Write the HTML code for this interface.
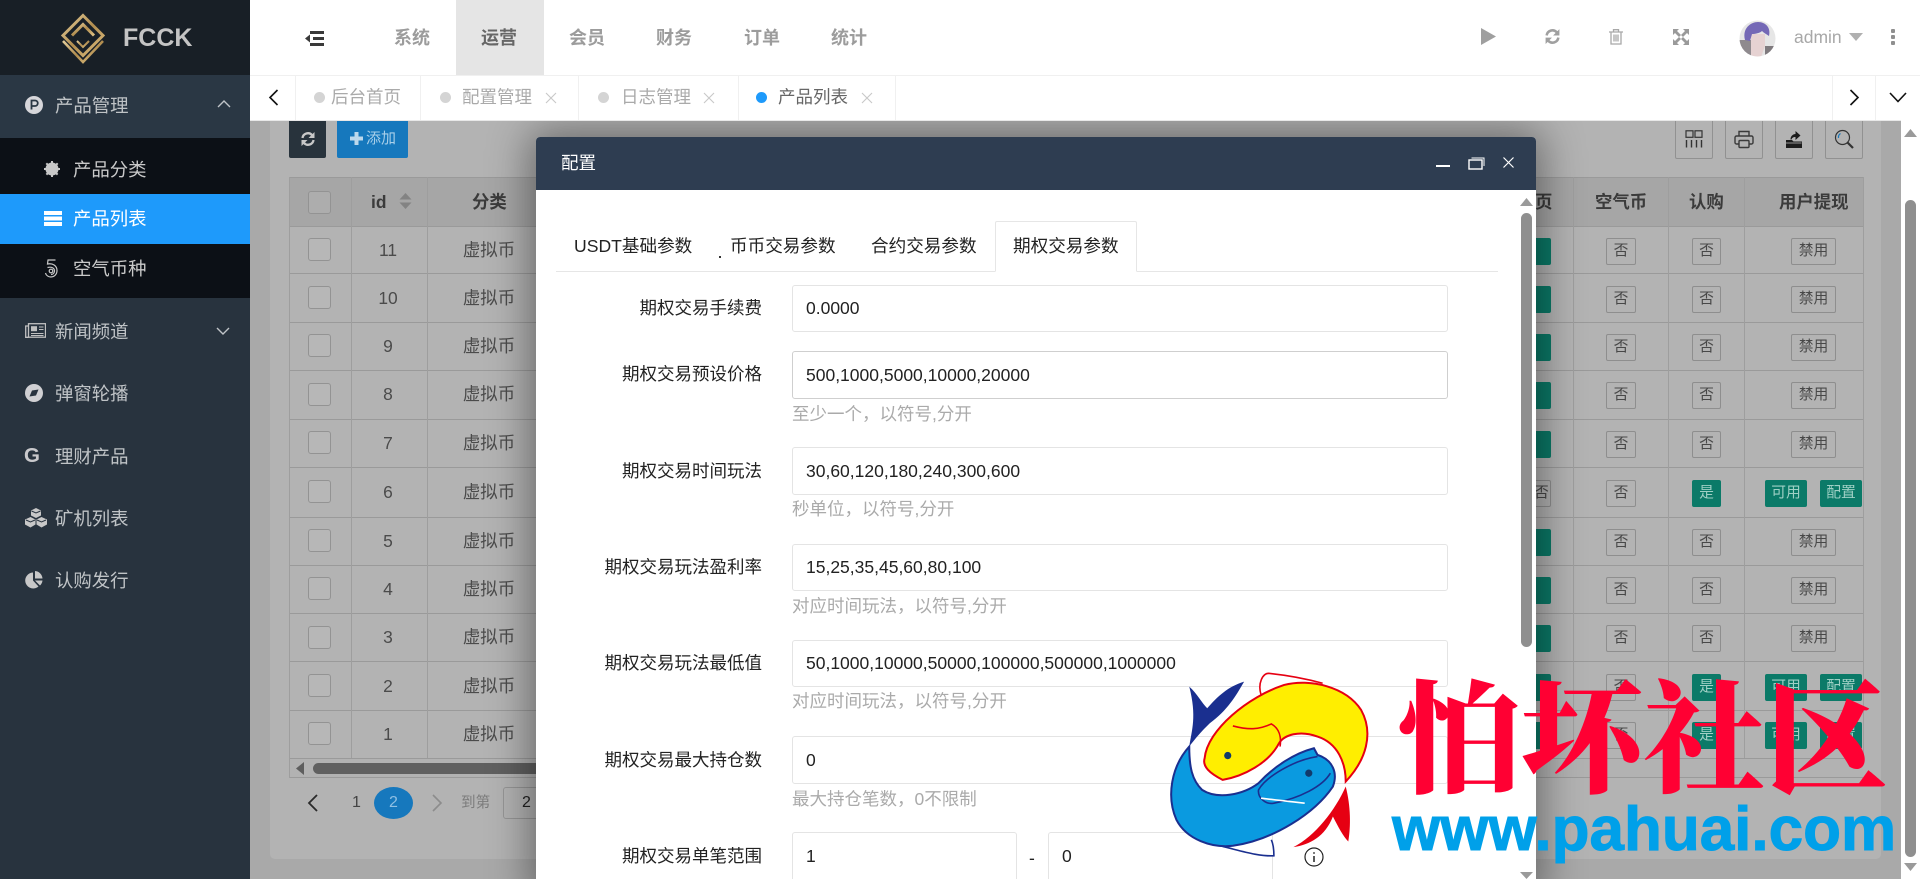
<!DOCTYPE html>
<html lang="zh"><head><meta charset="utf-8"><title>FCCK</title>
<style>
html,body{margin:0;padding:0;width:1920px;height:879px;overflow:hidden;background:#a9a9a9}
body{font-family:"Liberation Sans","Noto Sans CJK SC",sans-serif;position:relative;filter:blur(.35px)}
.a,.t,.r *,.l,.h,.ip,.hl,.vl,.tt{position:absolute}
.t{white-space:nowrap}
#side{left:0;top:0;width:250px;height:879px;background:#28333e;z-index:5;overflow:hidden}
.m{left:55px;width:100px;height:26px;line-height:26px;font-size:18.4px;color:#bfc3c6}
.s{left:73px;height:26px;line-height:26px;font-size:18.4px;color:#c9c9c9}
#top{left:250px;top:0;width:1670px;height:120px;z-index:5}
.nav{top:25px;height:26px;line-height:26px;font-size:18px;font-weight:bold;color:#9c9c9c}
.tab{top:85px;height:24px;line-height:24px;font-size:17.5px;color:#aaa}
.dot{width:11px;height:11px;border-radius:50%;background:#d4d4d4;top:92px}
.dv{top:76px;width:1px;height:44px;background:#f0f0f0}
.x{top:92px}
#bg{left:250px;top:120px;width:1651px;height:759px;background:#a9a9a9;overflow:hidden}
#panel{left:270px;top:120px;width:1611px;height:739px;background:#b3b3b3;border-radius:0 0 5px 5px}
.hl{left:289px;width:1574px;height:1px;background:#9a9a9a}
.vl{top:177px;width:1px;height:581px;background:#9e9e9e}
.r{left:0;width:1863px;position:absolute;color:#4b4b4b;font-size:17.4px}
.r>*{top:50%}
.cb{left:308px;width:21px;height:21px;margin-top:-12px;border:1px solid #939393;border-radius:3px;background:#b7b7b7}
.n{left:350px;width:76px;margin-top:-12.5px;height:24px;line-height:24px;text-align:center;font-weight:normal}
.v{left:427px;width:124px;margin-top:-12.5px;height:24px;line-height:24px;text-align:center;font-weight:normal}
.gb,.tb{height:25px;margin-top:-12.5px;line-height:25px;text-align:center;font-size:14.8px;border-radius:2px;border:1px solid #8e8e8e;color:#484848;box-sizing:content-box}
.tb{background:#0b7a68;border-color:#0b7a68;color:#9fd0c5}
.c0{left:1519px;width:30px}.c1{left:1606px;width:28px}.c2{left:1692px;width:27px}.c3{left:1791px;width:43px}
.k1{left:1765px;width:40px}.k2{left:1820px;width:40px}
.th{top:190px;height:24px;line-height:24px;font-size:17.4px;font-weight:bold;color:#3b3b3b}
.tbtn{top:119px;height:38px;width:36px;border:1px solid #919191;border-radius:0 0 2px 2px;background:#b3b3b3}
#modal{left:536px;top:137px;width:1000px;height:760px;background:#fff;box-shadow:0 0 42px 6px rgba(0,0,0,.42);border-radius:4px 4px 0 0;z-index:3}
#mh{left:536px;top:137px;width:1000px;height:53px;background:#2e3d51;border-radius:4px 4px 0 0;z-index:3}
.l{left:556px;width:206px;text-align:right;height:24px;line-height:24px;font-size:17.5px;color:#222;z-index:3;white-space:nowrap}
.ip{left:792px;border:1px solid #e4e4e4;border-radius:3px;font-size:17.5px;color:#222;padding-left:13px;box-sizing:border-box;width:656px;z-index:3;display:flex;align-items:center;background:#fff}
.h{left:792px;height:24px;line-height:24px;font-size:17.5px;color:#aaa;z-index:3;white-space:nowrap}
.tt{top:234px;height:24px;line-height:24px;font-size:17.6px;color:#222;z-index:3;white-space:nowrap}
#wm{left:0;top:0;z-index:9}
</style></head><body>

<div class="a" id="bg"></div>
<div class="a" id="panel"></div>

<!-- toolbar -->
<div class="a" style="left:289px;top:120px;width:37px;height:38px;background:#28333c;border-radius:0 0 2px 2px"></div>
<svg class="a" style="left:300px;top:131px" width="16" height="16" viewBox="0 0 16 16" fill="none" stroke="#c8c8c8" stroke-width="2.300"><path d="M2.500 7A5.500 5.500 0 0 1 12 4"/><path d="M13.500 9A5.500 5.500 0 0 1 4 12"/><path d="M14.500 1V7H8.500Z M1.500 15V9H7.500Z" fill="#c8c8c8" stroke="none"/></svg>
<div class="a" style="left:337px;top:120px;width:71px;height:38px;background:#1678bd;border-radius:0 0 2px 2px"></div>
<svg class="a" style="left:350px;top:132px" width="13" height="13"><path d="M4.500 0h4v4.500H13v4H8.500V13h-4V8.500H0v-4h4.500z" fill="#bcd8ec"/></svg>
<div class="t" style="left:366px;top:126px;height:26px;line-height:26px;font-size:15px;color:#a8cfe9">添加</div>

<div class="a tbtn" style="left:1675px"></div><div class="a tbtn" style="left:1725px"></div><div class="a tbtn" style="left:1775px"></div><div class="a tbtn" style="left:1825px"></div>
<svg class="a" style="left:1685px;top:130px" width="18" height="18" viewBox="0 0 18 18" fill="none" stroke="#333" stroke-width="1.200"><rect x="1" y=".8" width="7" height="6.500"/><rect x="10" y=".8" width="7" height="6.500"/><path d="M1.500 10v7.500M6.500 10v7.500M11.500 10v7.500M16.500 10v7.500" stroke-width="1.400"/></svg>
<svg class="a" style="left:1734px;top:130px" width="20" height="19" viewBox="0 0 20 19" fill="none" stroke="#3a3a3a" stroke-width="1.400"><path d="M5 6V1.500h10V6M5 14H2.500A1.500 1.500 0 0 1 1 12.500V7.500A1.500 1.500 0 0 1 2.500 6h15A1.500 1.500 0 0 1 19 7.500v5a1.500 1.500 0 0 1-1.500 1.500H15"/><rect x="5" y="10.500" width="10" height="7" rx="1"/></svg>
<svg class="a" style="left:1785px;top:130px" width="18" height="19" viewBox="0 0 18 19"><path d="M1 10h6l1.500 1.500H17V18H1z" fill="#1c1c1c"/><path d="M1 13h15.500" stroke="#b3b3b3" stroke-width=".8"/><path d="M5.500 9.500C5.500 6 8 4 10.500 4V1l5 4.500-5 4.500V7C8 7 7 8 6.500 9.500z" fill="#1c1c1c"/></svg>
<svg class="a" style="left:1834px;top:129px" width="21" height="21" viewBox="0 0 21 21" fill="none" stroke="#333" stroke-width="1.200"><circle cx="8.500" cy="8.500" r="7"/><path d="M13.500 13.500l5.500 5.500" stroke-width="2.200"/><path d="M4.500 9A4.500 4.500 0 0 1 6.500 4.500" stroke="#1678bd"/></svg>

<!-- table -->
<div class="a" style="left:289px;top:177px;width:1574px;height:49px;background:#a6a6a6"></div>
<div class="a" style="left:289px;top:758px;width:1574px;height:20px;background:#b2b2b2"></div>
<div class="hl" style="top:177px"></div><div class="hl" style="top:226px"></div><div class="hl" style="top:273px"></div><div class="hl" style="top:322px"></div><div class="hl" style="top:370px"></div><div class="hl" style="top:419px"></div><div class="hl" style="top:467px"></div><div class="hl" style="top:517px"></div><div class="hl" style="top:565px"></div><div class="hl" style="top:613px"></div><div class="hl" style="top:661px"></div><div class="hl" style="top:710px"></div><div class="hl" style="top:758px"></div><div class="hl" style="top:777px"></div>
<div class="vl" style="left:289px;height:601px"></div><div class="vl" style="left:351px"></div><div class="vl" style="left:427px"></div><div class="vl" style="left:1573px"></div><div class="vl" style="left:1668px"></div><div class="vl" style="left:1744px"></div><div class="vl" style="left:1863px"></div>

<div class="a cb" style="left:308px;top:191px;margin:0;background:#adadad"></div>
<div class="th t" style="left:371px;font-family:'Liberation Sans',sans-serif">id</div>
<svg class="a" style="left:399px;top:193px" width="13" height="16" viewBox="0 0 13 16" fill="#838383"><path d="M6.500 0L12.500 6.500H.5z M.5 9.500H12.500L6.500 16z"/></svg>
<div class="th t" style="left:472px">分类</div>
<div class="th t" style="left:1535px">页</div><div class="th t" style="left:1595px">空气币</div><div class="th t" style="left:1689px">认购</div><div class="th t" style="left:1779px">用户提现</div>

<div class="r" style="top:226px;height:48px"><i class="cb"></i><b class="n">11</b><b class="v">虚拟币</b><i class="tb c0"></i><span class="gb c1">否</span><span class="gb c2">否</span><span class="gb c3">禁用</span></div>
<div class="r" style="top:274px;height:48px"><i class="cb"></i><b class="n">10</b><b class="v">虚拟币</b><i class="tb c0"></i><span class="gb c1">否</span><span class="gb c2">否</span><span class="gb c3">禁用</span></div>
<div class="r" style="top:322px;height:48px"><i class="cb"></i><b class="n">9</b><b class="v">虚拟币</b><i class="tb c0"></i><span class="gb c1">否</span><span class="gb c2">否</span><span class="gb c3">禁用</span></div>
<div class="r" style="top:370px;height:49px"><i class="cb"></i><b class="n">8</b><b class="v">虚拟币</b><i class="tb c0"></i><span class="gb c1">否</span><span class="gb c2">否</span><span class="gb c3">禁用</span></div>
<div class="r" style="top:419px;height:48px"><i class="cb"></i><b class="n">7</b><b class="v">虚拟币</b><i class="tb c0"></i><span class="gb c1">否</span><span class="gb c2">否</span><span class="gb c3">禁用</span></div>
<div class="r" style="top:467px;height:50px"><i class="cb"></i><b class="n">6</b><b class="v">虚拟币</b><span class="gb c0" style="text-align:left;text-indent:14px">否</span><span class="gb c1">否</span><span class="tb c2">是</span><span class="tb k1">可用</span><span class="tb k2">配置</span></div>
<div class="r" style="top:517px;height:48px"><i class="cb"></i><b class="n">5</b><b class="v">虚拟币</b><i class="tb c0"></i><span class="gb c1">否</span><span class="gb c2">否</span><span class="gb c3">禁用</span></div>
<div class="r" style="top:565px;height:48px"><i class="cb"></i><b class="n">4</b><b class="v">虚拟币</b><i class="tb c0"></i><span class="gb c1">否</span><span class="gb c2">否</span><span class="gb c3">禁用</span></div>
<div class="r" style="top:613px;height:49px"><i class="cb"></i><b class="n">3</b><b class="v">虚拟币</b><i class="tb c0"></i><span class="gb c1">否</span><span class="gb c2">否</span><span class="gb c3">禁用</span></div>
<div class="r" style="top:662px;height:48px"><i class="cb"></i><b class="n">2</b><b class="v">虚拟币</b><i class="tb c0"></i><span class="gb c1">否</span><span class="tb c2">是</span><span class="tb k1">可用</span><span class="tb k2">配置</span></div>
<div class="r" style="top:710px;height:48px"><i class="cb"></i><b class="n">1</b><b class="v">虚拟币</b><i class="tb c0"></i><span class="gb c1">否</span><span class="tb c2">是</span><span class="tb k1">可用</span><span class="tb k2">配置</span></div>

<!-- h scrollbar -->
<svg class="a" style="left:296px;top:762px" width="8" height="13"><path d="M8 0V13L0 6.500z" fill="#5e5e5e"/></svg>
<div class="a" style="left:313px;top:763px;width:300px;height:11px;border-radius:6px;background:#606060"></div>

<!-- pagination -->
<svg class="a" style="left:307px;top:794px" width="12" height="18" fill="none" stroke="#2a2a2a" stroke-width="1.800"><path d="M10 1L2 9l8 8"/></svg>
<div class="t" style="left:352px;top:791px;height:24px;line-height:24px;font-size:16px;color:#444">1</div>
<div class="a" style="left:374px;top:787px;width:39px;height:32px;border-radius:50%;background:#1678bd"></div>
<div class="t" style="left:374px;top:791px;width:39px;text-align:center;height:24px;line-height:24px;font-size:16px;color:#8fc0e4">2</div>
<svg class="a" style="left:431px;top:794px" width="12" height="18" fill="none" stroke="#8c8c8c" stroke-width="1.600"><path d="M2 1l8 8-8 8"/></svg>
<div class="t" style="left:461px;top:791px;height:24px;line-height:24px;font-size:14.6px;color:#7c7c7c">到第</div>
<div class="a" style="left:503px;top:787px;width:60px;height:30px;border:1px solid #969696;border-radius:3px"></div>
<div class="t" style="left:522px;top:791px;height:24px;line-height:24px;font-size:16px;color:#222">2</div>

<!-- page scrollbar -->
<div class="a" style="left:1901px;top:120px;width:19px;height:759px;background:#fff;z-index:4"></div>
<div class="a" style="left:1905px;top:200px;width:11px;height:657px;border-radius:6px;background:#8f8f8f;z-index:4"></div>
<svg class="a" style="left:1904px;top:129px;z-index:4" width="13" height="8"><path d="M6.500 0L13 8H0z" fill="#9a9a9a"/></svg>
<svg class="a" style="left:1904px;top:863px;z-index:4" width="13" height="8"><path d="M0 0H13L6.500 8z" fill="#9a9a9a"/></svg>

<!-- modal -->
<div class="a" id="modal"></div>
<div class="a" id="mh"></div>
<div class="t" style="left:561px;top:151px;height:24px;line-height:24px;font-size:17.5px;color:#fff;z-index:3">配置</div>
<div class="a" style="left:1436px;top:165px;width:14px;height:2px;background:#fff;z-index:3"></div>
<svg class="a" style="left:1468px;top:157px;z-index:3" width="17" height="13" fill="none" stroke="#fff" stroke-width="1.400"><rect x="1" y="3" width="13" height="9"/><path d="M3.500 1h12.500v8" stroke-width="1"/></svg>
<svg class="a" style="left:1502px;top:156px;z-index:3" width="13" height="13" fill="none" stroke="#fff" stroke-width="1.200"><path d="M1.500 1.500l10 10M11.500 1.500l-10 10"/></svg>

<div class="a" style="left:1521px;top:213px;width:11px;height:434px;border-radius:6px;background:#8f8f8f;z-index:3"></div>
<svg class="a" style="left:1520px;top:198px;z-index:3" width="13" height="8"><path d="M6.500 0L13 8H0z" fill="#9a9a9a"/></svg>
<svg class="a" style="left:1520px;top:872px;z-index:3" width="13" height="7"><path d="M0 0H13L6.500 7z" fill="#9a9a9a"/></svg>

<div class="a" style="left:556px;top:271px;width:942px;height:1px;background:#e6e6e6;z-index:3"></div>
<div class="a" style="left:995px;top:221px;width:142px;height:51px;border:1px solid #e6e6e6;border-bottom:1px solid #fff;border-radius:2px 2px 0 0;box-sizing:border-box;background:#fff;z-index:3"></div>
<div class="tt" style="left:574px">USDT基础参数</div>
<div class="a" style="left:719px;top:256px;width:2px;height:2px;background:#333;z-index:3"></div>
<div class="tt" style="left:730px">币币交易参数</div>
<div class="tt" style="left:871px">合约交易参数</div>
<div class="tt" style="left:1013px">期权交易参数</div>

<div class="l" style="top:296px">期权交易手续费</div>
<div class="ip" style="top:285px;height:47px">0.0000</div>
<div class="l" style="top:362px">期权交易预设价格</div>
<div class="ip" style="top:351px;height:48px;border-color:#cfcfcf">500,1000,5000,10000,20000</div>
<div class="h" style="top:402px">至少一个，以符号,分开</div>
<div class="l" style="top:459px">期权交易时间玩法</div>
<div class="ip" style="top:447px;height:48px">30,60,120,180,240,300,600</div>
<div class="h" style="top:497px">秒单位，以符号,分开</div>
<div class="l" style="top:555px">期权交易玩法盈利率</div>
<div class="ip" style="top:544px;height:47px">15,25,35,45,60,80,100</div>
<div class="h" style="top:594px">对应时间玩法，以符号,分开</div>
<div class="l" style="top:651px">期权交易玩法最低值</div>
<div class="ip" style="top:640px;height:47px">50,1000,10000,50000,100000,500000,1000000</div>
<div class="h" style="top:689px">对应时间玩法，以符号,分开</div>
<div class="l" style="top:748px">期权交易最大持仓数</div>
<div class="ip" style="top:736px;height:48px">0</div>
<div class="h" style="top:787px">最大持仓笔数，0不限制</div>
<div class="l" style="top:844px">期权交易单笔范围</div>
<div class="ip" style="top:832px;height:60px;width:225px;padding-bottom:12px">1</div>
<div class="t" style="left:1029px;top:846px;height:24px;line-height:24px;font-size:17.5px;color:#222;z-index:3">-</div>
<div class="ip" style="left:1048px;top:832px;height:60px;width:225px;padding-bottom:12px">0</div>
<svg class="a" style="left:1304px;top:847px;z-index:3" width="20" height="20" fill="none" stroke="#222"><circle cx="10" cy="10" r="9" stroke-width="1.200"/><path d="M10 9v6" stroke-width="1.500"/><circle cx="10" cy="6" r=".9" fill="#222" stroke="none"/></svg>

<!-- sidebar -->
<div class="a" id="side">
  <div class="a" style="left:0;top:0;width:250px;height:75px;background:#181f26"></div>
  <div class="a" style="left:0;top:75px;width:250px;height:63px;background:#2a3744"></div>
  <div class="a" style="left:0;top:138px;width:250px;height:160px;background:#0c1016"></div>
  <div class="a" style="left:0;top:194px;width:250px;height:50px;background:#1e9afb"></div>
  <svg class="a" style="left:58px;top:12px" width="50" height="54" viewBox="0 0 50 54" fill="none">
    <defs><linearGradient id="g" x1="0" y1="0" x2="1" y2="1"><stop offset="0" stop-color="#e6cf9c"/><stop offset=".5" stop-color="#b08c4e"/><stop offset="1" stop-color="#e0c284"/></linearGradient></defs>
    <path d="M25 3.500L45 23.500 25 43.500 5 23.500Z" stroke="url(#g)" stroke-width="3"/>
    <path d="M14 23.500L25 12.500 36 23.500" stroke="url(#g)" stroke-width="3"/>
    <path d="M19 29L25 35 31 29" stroke="url(#g)" stroke-width="2"/>
    <path d="M5 29L25 50 45 29" stroke="url(#g)" stroke-width="2.600"/>
  </svg>
  <div class="t" style="left:123px;top:23px;height:30px;line-height:30px;font-size:25px;font-weight:bold;color:#c4c4c4">FCCK</div>

  <svg class="a" style="left:25px;top:96px" width="18" height="18"><circle cx="9" cy="9" r="9" fill="#d6d6da"/><path d="M6.500 13.500V4.500H10a2.500 2.500 0 0 1 0 5.500H6.500" fill="none" stroke="#2a3744" stroke-width="1.800"/></svg>
  <div class="t m" style="top:93px">产品管理</div>
  <svg class="a" style="left:217px;top:99px" width="14" height="9" fill="none" stroke="#c0c4c8" stroke-width="1.400"><path d="M1 8l6-6 6 6"/></svg>

  <svg class="a" style="left:44px;top:161px" width="16" height="16" viewBox="0 0 16 16"><circle cx="8" cy="8" r="6.500" fill="#c8c8c8"/><path d="M8 0v16M0 8h16M2.300 2.300l11.400 11.400M13.700 2.300L2.300 13.700" stroke="#c8c8c8" stroke-width="2" stroke-dasharray="2 12"/></svg>
  <div class="t s" style="top:157px">产品分类</div>
  <svg class="a" style="left:44px;top:211px" width="18" height="15"><path d="M0 0h18v4H0zM0 5.500h18v4H0zM0 11h18v4H0z" fill="#fff"/></svg>
  <div class="t s" style="top:206px;color:#fff">产品列表</div>
  <svg class="a" style="left:44px;top:259px" width="15" height="19" fill="none" stroke="#c8c8c8" stroke-width="1.200"><path d="M3.500 1h8M4 1L3.500 5c5-1 9.500 1.500 9.500 6.500 0 4-3 6.500-6 6.500-2.500 0-5-1.500-5.500-4"/><path d="M3.500 8.500c4-1 7 .5 7 3.500 0 2-1.500 3.500-3.500 3.500"/><circle cx="7" cy="12" r="1.800"/></svg>
  <div class="t s" style="top:256px">空气币种</div>

  <svg class="a" style="left:25px;top:323px" width="21" height="15" fill="none" stroke="#c0c0c0" stroke-width="1.300"><rect x="3.500" y=".7" width="17" height="13.500"/><path d="M3.500 3H.7v11.300h3"/><rect x="6" y="3.200" width="6" height="5" fill="#c0c0c0" stroke="none"/><path d="M14 4h4.500M14 6.500h4.500M6 10.500h12.500M6 12.500h12.500" stroke-width="1"/></svg>
  <div class="t m" style="top:319px">新闻频道</div>
  <svg class="a" style="left:216px;top:327px" width="14" height="9" fill="none" stroke="#c0c4c8" stroke-width="1.400"><path d="M1 1l6 6 6-6"/></svg>

  <svg class="a" style="left:25px;top:384px" width="18" height="18"><circle cx="9" cy="9" r="9" fill="#d0d0d3"/><path d="M4.500 12.500L7 6.500 13.500 5.500 11 11.500z" fill="#28333e"/></svg>
  <div class="t m" style="top:381px">弹窗轮播</div>
  <div class="t" style="left:24px;top:443px;height:26px;line-height:26px;font-size:20.500px;font-weight:bold;color:#c9c9cc">G</div>
  <div class="t m" style="top:444px">理财产品</div>
  <svg class="a" style="left:25px;top:508px" width="22" height="20" viewBox="0 0 22 20"><path d="M11 0l5 2.500v5L11 10 6 7.500v-5zM5.500 9l5 2.500v5l-5 3-5.500-3v-5zM16.500 9l5.500 2.500v5l-5.500 3-5-3v-5z" fill="#c8c8c8"/><path d="M6.500 3L11 5l4.500-2M1 12l4.500 2L10 12M12 12l4.500 2 4.500-2" stroke="#28333e" fill="none"/></svg>
  <div class="t m" style="top:506px">矿机列表</div>
  <svg class="a" style="left:25px;top:571px" width="18" height="18" viewBox="0 0 18 18"><path d="M8 1.500V9.500L13.500 15.500A8 8 0 1 1 8 1.500Z" fill="#c8c8c8"/><path d="M10 0A8 8 0 0 1 17.500 7.500H10ZM10 9.500H17.500A8 8 0 0 1 15 14.500Z" fill="#c8c8c8"/></svg>
  <div class="t m" style="top:568px">认购发行</div>
</div>

<!-- top bars -->
<div class="a" style="left:250px;top:0;width:1670px;height:120px;background:#fff;z-index:4"></div>
<div class="a" style="left:250px;top:75px;width:1670px;height:1px;background:#f0f0f0;z-index:5"></div>
<div class="a" style="left:250px;top:120px;width:1651px;height:1px;background:#e8e8e8;z-index:5"></div>
<div class="a" id="top" style="left:0;width:1920px;pointer-events:none">
  <svg class="a" style="left:305px;top:31px" width="19" height="15"><path d="M5 0h14v3H5zM8 6h11v3H8zM5 12h14v3H5zM5 3.500L0 7.500l5 4z" fill="#3a3a3a"/></svg>
  <div class="t nav" style="left:394px">系统</div>
  <div class="a" style="left:456px;top:0;width:88px;height:75px;background:#e5e5e5"></div>
  <div class="t nav" style="left:481px;color:#666">运营</div>
  <div class="t nav" style="left:569px">会员</div><div class="t nav" style="left:656px">财务</div><div class="t nav" style="left:744px">订单</div><div class="t nav" style="left:831px">统计</div>

  <svg class="a" style="left:1481px;top:28px" width="15" height="17"><path d="M0 0L15 8.500 0 17z" fill="#9f9f9f"/></svg>
  <svg class="a" style="left:1544px;top:28px" width="17" height="17" viewBox="0 0 16 16" fill="none" stroke="#a0a0a0" stroke-width="2.400"><path d="M2.500 7A5.500 5.500 0 0 1 12 4"/><path d="M13.500 9A5.500 5.500 0 0 1 4 12"/><path d="M14.500 1V7H8.500Z M1.500 15V9H7.500Z" fill="#a0a0a0" stroke="none"/></svg>
  <svg class="a" style="left:1609px;top:29px" width="14" height="16" fill="none" stroke="#a8a8a8" stroke-width="1.300"><path d="M0 3h14M4.500 3V.7h5V3M2 3v12h10V3M5 5.500v7M7 5.500v7M9 5.500v7"/></svg>
  <svg class="a" style="left:1673px;top:29px" width="16" height="16" viewBox="0 0 16 16" fill="#9a9a9a"><path d="M0 0h6L4 2 8 6 6 8 2 4 0 6zM16 0v6l-2-2-4 4-2-2 4-4-2-2zM0 16v-6l2 2 4-4 2 2-4 4 2 2zM16 16h-6l2-2-4-4 2-2 4 4 2-2z"/></svg>
  <svg class="a" style="left:1739px;top:20px" width="37" height="37" viewBox="0 0 37 37">
    <defs><clipPath id="av"><circle cx="18.500" cy="18.500" r="18"/></clipPath></defs>
    <g clip-path="url(#av)"><rect width="37" height="37" fill="#e6e6e6"/>
    <rect y="20" width="12" height="17" fill="#8f8a8e"/><rect x="26" y="26" width="11" height="11" fill="#7f7a7e"/>
    <path d="M12 14h14v12l-4 11H12z" fill="#e6d2d2"/>
    <path d="M6 20C3 8 12 2 19 2c8 0 13 6 11 14-3-2-5-3-7-5-2 2-7 3-10 3l-2 7z" fill="#7468b6"/></g>
  </svg>
  <div class="t" style="left:1794px;top:24px;height:26px;line-height:26px;font-size:17.500px;color:#a8a8a8">admin</div>
  <svg class="a" style="left:1849px;top:33px" width="14" height="8"><path d="M0 0H14L7 8z" fill="#b0b0b0"/></svg>
  <div class="a" style="left:1891px;top:29px;width:4px;height:4px;background:#8f8f8f;border-radius:1px"></div>
  <div class="a" style="left:1891px;top:35px;width:4px;height:4px;background:#8f8f8f;border-radius:1px"></div>
  <div class="a" style="left:1891px;top:41px;width:4px;height:4px;background:#8f8f8f;border-radius:1px"></div>

  <svg class="a" style="left:268px;top:89px" width="11" height="17" fill="none" stroke="#111" stroke-width="1.600"><path d="M9.500 1L2 8.500l7.500 7.500"/></svg>
  <div class="a dv" style="left:295px"></div>
  <div class="a dot" style="left:314px"></div><div class="t tab" style="left:331px">后台首页</div>
  <div class="a dv" style="left:420px"></div>
  <div class="a dot" style="left:440px"></div><div class="t tab" style="left:462px">配置管理</div>
  <svg class="a x" style="left:545px" width="12" height="12" fill="none" stroke="#c8c8c8" stroke-width="1.100"><path d="M1 1l10 10M11 1L1 11"/></svg>
  <div class="a dv" style="left:578px"></div>
  <div class="a dot" style="left:598px"></div><div class="t tab" style="left:621px">日志管理</div>
  <svg class="a x" style="left:703px" width="12" height="12" fill="none" stroke="#c8c8c8" stroke-width="1.100"><path d="M1 1l10 10M11 1L1 11"/></svg>
  <div class="a dv" style="left:738px"></div>
  <div class="a dot" style="left:756px;background:#1e9afb"></div><div class="t tab" style="left:778px;color:#666">产品列表</div>
  <svg class="a x" style="left:861px" width="12" height="12" fill="none" stroke="#c8c8c8" stroke-width="1.100"><path d="M1 1l10 10M11 1L1 11"/></svg>
  <div class="a dv" style="left:895px"></div>
  <div class="a dv" style="left:1832px"></div>
  <svg class="a" style="left:1849px;top:89px" width="11" height="17" fill="none" stroke="#111" stroke-width="1.600"><path d="M1.500 1L9 8.500 1.500 16"/></svg>
  <div class="a dv" style="left:1875px"></div>
  <svg class="a" style="left:1889px;top:92px" width="18" height="11" fill="none" stroke="#111" stroke-width="1.600"><path d="M1 1l8 8.500L17 1"/></svg>
</div>

<!-- watermark -->
<svg class="a" id="wm" width="1920" height="879" viewBox="0 0 1920 879">
  <g transform="translate(1120,640) scale(.513,.333)">
    <path d="M275 165C268 130 278 100 290 100C320 105 360 115 395 130" fill="#fff" stroke="#e60012" stroke-width="1.600" vector-effect="non-scaling-stroke"/>
    <path d="M200 620C240 635 270 650 300 648C300 630 298 610 295 600" fill="#fff" stroke="#1a2f8f" stroke-width="1.600" vector-effect="non-scaling-stroke"/>
    <path d="M165 355C170 270 250 170 320 135C370 115 440 140 470 210C495 280 480 360 440 425C440 370 425 310 385 290C350 270 320 285 310 310C290 370 240 410 200 420C175 400 160 380 165 355Z" fill="#ffee00" stroke="#e60012" stroke-width="2" vector-effect="non-scaling-stroke"/>
    <path d="M220 258C250 270 270 270 295 252C310 265 315 290 312 320" fill="none" stroke="#e60012" stroke-width="1.600" vector-effect="non-scaling-stroke"/>
    <path d="M135 320C100 380 90 470 110 540C130 600 180 625 220 618C300 600 380 520 415 440C425 400 415 360 385 345L378 325C340 340 300 380 270 430C240 465 190 480 160 450C140 420 135 380 135 320Z" fill="#0a9ae0" stroke="#1a2f8f" stroke-width="2" vector-effect="non-scaling-stroke"/>
    <path d="M385 350C340 360 285 410 270 450C268 475 285 495 300 490C350 475 395 440 410 400" fill="none" stroke="#1a2f8f" stroke-width="1.600" vector-effect="non-scaling-stroke"/>
    <path d="M275 475C300 480 330 485 360 490" fill="none" stroke="#fff" stroke-width="1.600" vector-effect="non-scaling-stroke"/>
    <path d="M135 140C150 160 160 190 170 205C190 170 210 140 242 125C225 170 210 210 175 250C155 280 145 300 135 320C140 270 150 230 135 140Z" fill="#1a2f8f"/>
    <path d="M440 440C420 510 380 590 338 622C370 615 400 590 415 530C425 560 435 590 445 605C450 560 450 500 440 440Z" fill="#e60012"/>
    <ellipse cx="210" cy="347" rx="7" ry="11" fill="#123a6b"/>
    <ellipse cx="368" cy="400" rx="7" ry="11" fill="#123a6b"/>
  </g>
  <text x="1398" y="783" font-family="'Noto Serif CJK SC',serif" font-weight="900" font-size="122" fill="#ff0033" textLength="490" lengthAdjust="spacingAndGlyphs">怕坏社区</text>
  <text x="1392" y="850" font-family="'Liberation Sans',sans-serif" font-weight="700" font-size="62" fill="#00a0e9" stroke="#00a0e9" stroke-width="1">www.pahuai.com</text>
</svg>
</body></html>
